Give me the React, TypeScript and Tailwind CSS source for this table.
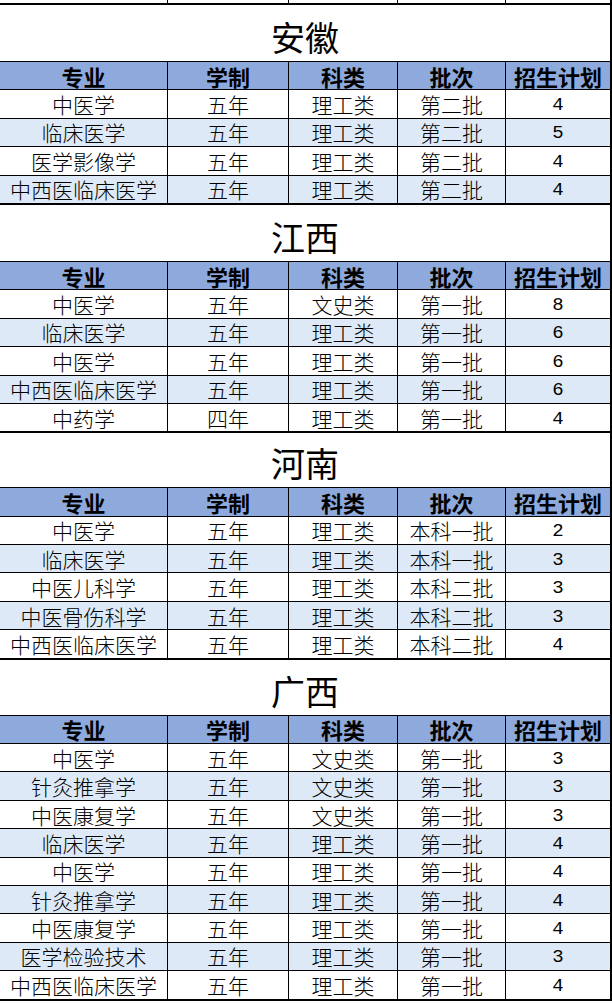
import React from "react";

type Row = [string, string, string, string, string];

const sections: { name: string; titleH: string; rows: Row[] }[] = [
  {
    name: "安徽",
    titleH: "h-[58px]",
    rows: [
      ["中医学", "五年", "理工类", "第二批", "4"],
      ["临床医学", "五年", "理工类", "第二批", "5"],
      ["医学影像学", "五年", "理工类", "第二批", "4"],
      ["中西医临床医学", "五年", "理工类", "第二批", "4"],
    ],
  },
  {
    name: "江西",
    titleH: "h-[58px]",
    rows: [
      ["中医学", "五年", "文史类", "第一批", "8"],
      ["临床医学", "五年", "理工类", "第一批", "6"],
      ["中医学", "五年", "理工类", "第一批", "6"],
      ["中西医临床医学", "五年", "理工类", "第一批", "6"],
      ["中药学", "四年", "理工类", "第一批", "4"],
    ],
  },
  {
    name: "河南",
    titleH: "h-[56px]",
    rows: [
      ["中医学", "五年", "理工类", "本科一批", "2"],
      ["临床医学", "五年", "理工类", "本科一批", "3"],
      ["中医儿科学", "五年", "理工类", "本科二批", "3"],
      ["中医骨伤科学", "五年", "理工类", "本科二批", "3"],
      ["中西医临床医学", "五年", "理工类", "本科二批", "4"],
    ],
  },
  {
    name: "广西",
    titleH: "h-[57px]",
    rows: [
      ["中医学", "五年", "文史类", "第一批", "3"],
      ["针灸推拿学", "五年", "文史类", "第一批", "3"],
      ["中医康复学", "五年", "文史类", "第一批", "3"],
      ["临床医学", "五年", "理工类", "第一批", "4"],
      ["中医学", "五年", "理工类", "第一批", "4"],
      ["针灸推拿学", "五年", "理工类", "第一批", "4"],
      ["中医康复学", "五年", "理工类", "第一批", "4"],
      ["医学检验技术", "五年", "理工类", "第一批", "3"],
      ["中西医临床医学", "五年", "理工类", "第一批", "4"],
    ],
  },
];

const headers = ["专业", "学制", "科类", "批次", "招生计划"];

const grid = "grid grid-cols-[168px_121px_109px_108px_106px]";
const cell = "flex items-center justify-center border-r border-black whitespace-nowrap";
const lastCell = "flex items-center justify-center border-r-2 border-black";

const cjk = "font-['Noto_Sans_CJK_SC',sans-serif]";

export default function App() {
  return (
    <div className={`w-[612px] bg-white text-black ${cjk}`}>
      {/* tail of the previous table */}
      <div className={`${grid} h-[3px]`}>
        <div className={cell} />
        <div className={cell} />
        <div className={cell} />
        <div className={cell} />
        <div className={lastCell} />
      </div>

      {sections.map((sec, si) => (
        <div key={sec.name} className={si === sections.length - 1 ? "border-b-2 border-black" : ""}>
          <div
            className={`${sec.titleH} flex items-end justify-center border-t-2 border-r-2 border-black pb-[5px]`}
          >
            <span className="text-[34px] leading-[38px]">{sec.name}</span>
          </div>

          <div className={`${grid} h-[28.4px] border-t border-black bg-[#8ea9db]`}>
            {headers.map((h, i) => (
              <div key={h} className={`${i === 4 ? lastCell : cell} text-[22px] font-bold leading-[26px]`}>
                {h}
              </div>
            ))}
          </div>

          {sec.rows.map((r, ri) => (
            <div
              key={ri}
              className={`${grid} h-[28.4px] border-t border-black ${ri % 2 === 1 ? "bg-[#dde9f6]" : "bg-white"}`}
            >
              {r.map((v, i) =>
                i === 4 ? (
                  <div key={i} className={`${lastCell} font-['Liberation_Mono',monospace] text-[19px] leading-[24px] pt-[2px]`}>
                    {v}
                  </div>
                ) : (
                  <div key={i} className={`${cell} text-[21px] font-light leading-[26px]`}>
                    {v}
                  </div>
                )
              )}
            </div>
          ))}
        </div>
      ))}
    </div>
  );
}
